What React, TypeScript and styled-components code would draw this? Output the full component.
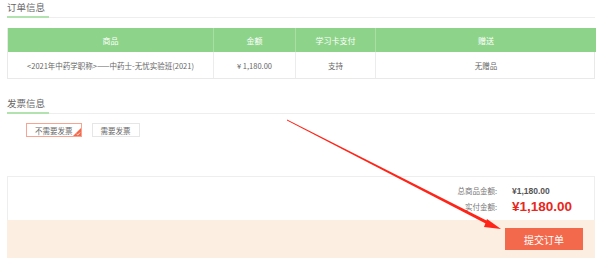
import React from "react";
import styled, { createGlobalStyle } from "styled-components";

const Global = createGlobalStyle`
  html, body { margin: 0; padding: 0; background: #fff; }
  body { font-family: "Noto Sans CJK SC", "Liberation Sans", sans-serif; width: 601px; height: 266px; overflow: hidden; }
`;

const Page = styled.div`
  position: relative;
  width: 601px;
  height: 266px;
  padding: 0 6px 0 7px;
  box-sizing: border-box;
`;

const TitleBar = styled.div<{ $top: number }>`
  margin-top: ${(p) => p.$top}px;
  border-bottom: 1px solid #eeeeee;
  height: 18px;
  box-sizing: border-box;
  display: flex;
  align-items: flex-end;
`;

const Title = styled.span`
  display: block;
  font-size: 9.5px;
  line-height: 12px;
  color: #666;
  padding: 0 4px 3px 0;
  margin-bottom: -1px;
  border-bottom: 2px solid #b2e3ae;
`;

const Table = styled.div`
  margin-top: 10px;
  display: grid;
  grid-template-columns: 206px 82px 80px 220px;
  border: 1px solid #e9e9e9;
  border-top: none;
`;

const HeadCell = styled.div<{ $last?: boolean }>`
  background: #8dd48a;
  color: #fff;
  font-size: 8px;
  height: 24px;
  display: flex;
  align-items: center;
  justify-content: center;
  border-right: ${(p) => (p.$last ? "none" : "1px solid #a9dfa6")};
`;

const BodyCell = styled.div<{ $last?: boolean }>`
  color: #666;
  font-size: 7.5px;
  height: 26px;
  display: flex;
  align-items: center;
  justify-content: center;
  border-right: ${(p) => (p.$last ? "none" : "1px solid #ececec")};
  white-space: nowrap;
`;

const Options = styled.div`
  display: flex;
  gap: 10px;
  margin-top: 9px;
  padding-left: 19px;
`;

const Option = styled.div<{ $active?: boolean }>`
  position: relative;
  height: 14px;
  padding: 0 8px;
  box-sizing: border-box;
  border: 1px solid ${(p) => (p.$active ? "#f7a492" : "#e6e6e6")};
  display: flex;
  align-items: center;
  font-size: 7.5px;
  color: #666;
  overflow: hidden;
`;

const Corner = styled.svg`
  position: absolute;
  right: 0;
  bottom: 0;
`;

const Panel = styled.div`
  margin-top: 39px;
  border: 1px solid #eeeeee;
  border-bottom: none;
`;

const Totals = styled.div`
  height: 43px;
  display: grid;
  grid-template-columns: 1fr auto;
  grid-template-rows: 16px 16px;
  align-content: center;
  column-gap: 15px;
  padding-right: 20px;
`;

const Label = styled.div`
  font-size: 7.5px;
  color: #777;
  display: flex;
  align-items: center;
  justify-content: flex-end;
`;

const Value = styled.div<{ $big?: boolean }>`
  font-family: "Liberation Sans", "Noto Sans CJK SC", sans-serif;
  font-weight: bold;
  font-size: ${(p) => (p.$big ? "13.5px" : "8.5px")};
  color: ${(p) => (p.$big ? "#e8271d" : "#555")};
  width: 62px;
  display: flex;
  align-items: center;
`;

const Footer = styled.div`
  background: #fdeee2;
  height: 38px;
  display: flex;
  justify-content: flex-end;
  align-items: flex-start;
  padding: 8px 12px 0 0;
  box-sizing: border-box;
  margin: 0 -1px;
`;

const Submit = styled.button`
  width: 78px;
  height: 22px;
  border: none;
  background: #f3694c;
  color: #fff;
  font-family: "Noto Sans CJK SC", sans-serif;
  font-size: 10px;
  padding: 0;
`;

const Arrow = styled.svg`
  position: absolute;
  left: 0;
  top: 0;
  pointer-events: none;
`;

export default function App() {
  return (
    <Page>
      <Global />
      <TitleBar $top={0}>
        <Title>订单信息</Title>
      </TitleBar>
      <Table>
        <HeadCell>商品</HeadCell>
        <HeadCell>金额</HeadCell>
        <HeadCell>学习卡支付</HeadCell>
        <HeadCell $last>赠送</HeadCell>
        <BodyCell>&lt;2021年中药学职称&gt;——中药士-无忧实验班(2021)</BodyCell>
        <BodyCell>¥ 1,180.00</BodyCell>
        <BodyCell>支持</BodyCell>
        <BodyCell $last>无赠品</BodyCell>
      </Table>
      <TitleBar $top={17}>
        <Title>发票信息</Title>
      </TitleBar>
      <Options>
        <Option $active>
          不需要发票
          <Corner width="8" height="8" viewBox="0 0 8 8">
            <polygon points="8,0 8,8 0,8" fill="#f3694c" />
            <polyline points="3.6,6 4.8,7 7,4.6" fill="none" stroke="#fff" strokeWidth="0.8" />
          </Corner>
        </Option>
        <Option>需要发票</Option>
      </Options>
      <Panel>
        <Totals>
          <Label>总商品金额:</Label>
          <Value>¥1,180.00</Value>
          <Label>实付金额:</Label>
          <Value $big>¥1,180.00</Value>
        </Totals>
        <Footer>
          <Submit>提交订单</Submit>
        </Footer>
      </Panel>
      <Arrow width="601" height="266" viewBox="0 0 601 266">
        <polygon points="287,119.6 490.5,222.6 489.5,225.4 287,120.4" fill="#ff2418" />
        <polygon points="501,229 487,219 484,227" fill="#ff2418" />
      </Arrow>
    </Page>
  );
}
